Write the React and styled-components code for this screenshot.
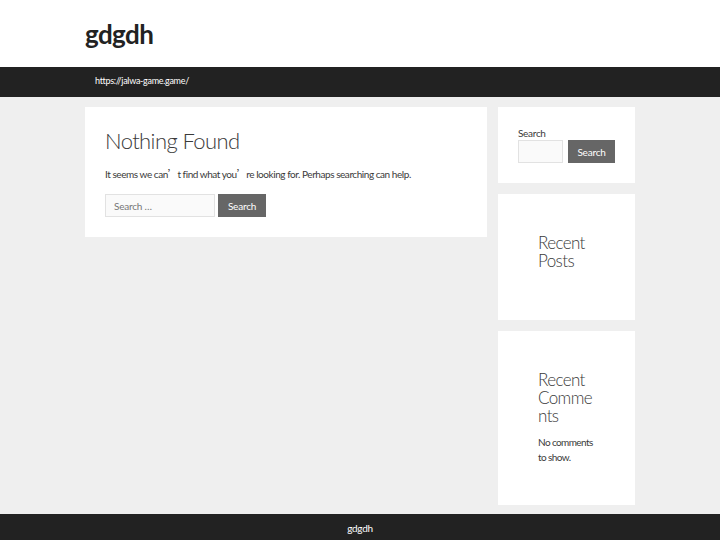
import React from 'react'
import styled, { createGlobalStyle } from 'styled-components'

const Global = createGlobalStyle`
    html, body {
        margin: 0;
        padding: 0;
        background: #efefef;
        font-family: "Source Sans Pro", Lato, "Noto Sans", sans-serif;
        color: #3a3a3a;
        letter-spacing: -0.3px;
    }
    * { box-sizing: border-box; }
`

const Header = styled.header`
    background: #fff;
    height: 67px;
    display: flex;
    align-items: center;
`

const Inner = styled.div`
    width: 550px;
    margin: 0 auto;
`

const SiteTitle = styled.div`
    font-size: 26px;
    font-weight: 700;
    color: #222;
    line-height: 1;
    letter-spacing: -0.6px;
`

const Nav = styled.nav`
    background: #222;
    height: 30px;
    display: flex;
    align-items: center;
`

const NavLink = styled.a`
    display: block;
    color: #fff;
    font-size: 9px;
    line-height: 12px;
    letter-spacing: -0.3px;
    text-decoration: none;
    padding-left: 10px;
    margin-top: -2px;
`

const Main = styled.div`
    width: 550px;
    margin: 10px auto 0;
    display: grid;
    grid-template-columns: 402px 137px;
    column-gap: 11px;
    align-items: start;
`

const Card = styled.div`
    background: #fff;
    padding: 20px;
`

const Title = styled.h1`
    font-size: 22px;
    font-weight: 300;
    line-height: 27px;
    letter-spacing: -0.6px;
    margin: 0 0 13px;
    color: #3a3a3a;
`

const Text = styled.p`
    font-size: 10px;
    line-height: 15px;
    letter-spacing: ${p => (p.tight ? -0.6 : -0.45)}px;
    margin: ${p => (p.flush ? 0 : '0 0 12px')};
    color: #3a3a3a;
`

const Quote = styled.span`
    font-family: "Noto Sans CJK SC", sans-serif;
    line-height: 0;
`

const SearchRow = styled.form`
    display: flex;
    gap: ${p => p.gap || 3}px;
`

const Input = styled.input`
    width: ${p => p.w}px;
    height: 23px;
    border: 1px solid #e2e2e2;
    background: #fafafa;
    font-family: inherit;
    font-size: 10px;
    letter-spacing: -0.2px;
    color: #666;
    padding: 0 8px;
    outline: none;
    &::placeholder { color: #777; }
`

const Button = styled.button`
    height: 23px;
    width: 48px;
    background: #666;
    color: #fff;
    border: none;
    font-family: inherit;
    font-size: 10px;
    letter-spacing: -0.2px;
    padding: 0;
`

const Sidebar = styled.aside`
    display: flex;
    flex-direction: column;
    gap: 11px;
`

const Widget = styled.div`
    background: #fff;
    padding: ${p => p.pad}px;
`

const Label = styled.div`
    font-size: 10px;
    line-height: 13px;
    color: #3a3a3a;
`

const WidgetTitle = styled.h2`
    font-size: 17px;
    font-weight: 300;
    line-height: 18px;
    letter-spacing: -0.6px;
    margin: 0 0 10px;
    overflow-wrap: anywhere;
    color: #3a3a3a;
`

const Footer = styled.footer`
    background: #222;
    margin-top: 9px;
    padding: 7px 0 12px;
    text-align: center;
    color: #fff;
    font-size: 10px;
    line-height: 15px;
`

export default function App() {
    return (
        <>
            <Global />
            <Header>
                <Inner>
                    <SiteTitle>gdgdh</SiteTitle>
                </Inner>
            </Header>
            <Nav>
                <Inner>
                    <NavLink href="#">https://jalwa-game.game/</NavLink>
                </Inner>
            </Nav>
            <Main>
                <Card>
                    <Title>Nothing Found</Title>
                    <Text>
                        It seems we can<Quote>’</Quote>t find what you<Quote>’</Quote>re looking for. Perhaps searching can help.
                    </Text>
                    <SearchRow>
                        <Input w={110} placeholder="Search …" />
                        <Button type="button">Search</Button>
                    </SearchRow>
                </Card>
                <Sidebar>
                    <Widget pad={20}>
                        <Label>Search</Label>
                        <SearchRow gap={5}>
                            <Input w={45} />
                            <Button type="button">Search</Button>
                        </SearchRow>
                    </Widget>
                    <Widget pad={40}>
                        <WidgetTitle>Recent Posts</WidgetTitle>
                    </Widget>
                    <Widget pad={40}>
                        <WidgetTitle>Recent Comments</WidgetTitle>
                        <Text flush tight>No comments to show.</Text>
                    </Widget>
                </Sidebar>
            </Main>
            <Footer>gdgdh</Footer>
        </>
    )
}
